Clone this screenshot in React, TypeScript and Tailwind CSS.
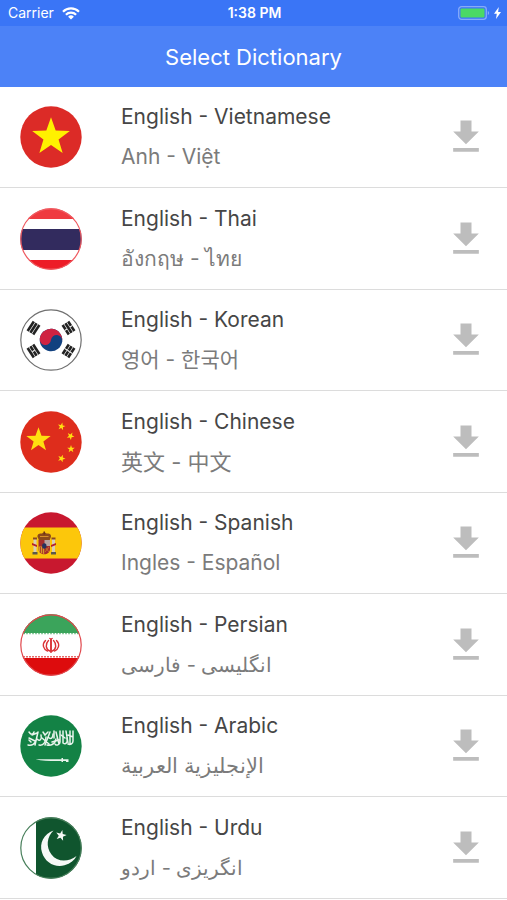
import type { ReactNode } from "react";

const STAR = "M0-10 2.36-3.24 9.51-3.09 3.82 1.24 5.88 8.09 0 4 -5.88 8.09 -3.82 1.24 -9.51-3.09 -2.36-3.24Z";

interface FlagProps {
  id: string;
  children: ReactNode;
  ring?: string;
}

function Flag({ id, children, ring }: FlagProps) {
  return (
    <svg viewBox="0 0 62 62" className="w-[62px] h-[62px] shrink-0" aria-hidden="true">
      <defs>
        <clipPath id={id}>
          <circle cx="31" cy="31" r="30.7" />
        </clipPath>
      </defs>
      <g clipPath={`url(#${id})`}>{children}</g>
      {ring && <circle cx="31" cy="31" r="30.2" fill="none" stroke={ring} strokeWidth="1.2" />}
    </svg>
  );
}

function VietnamFlag() {
  return (
    <Flag id="vn">
      <rect width="62" height="62" fill="#dc2b27" />
      <path d={STAR} transform="translate(31 31) scale(1.98)" fill="#fff100" />
    </Flag>
  );
}

function ThaiFlag() {
  return (
    <Flag id="th" ring="#ef5a60">
      <rect width="62" height="62" fill="#fff" />
      <rect width="62" height="11" fill="#ef3a40" />
      <rect y="52" width="62" height="10" fill="#ed1c27" />
      <rect y="21" width="62" height="21" fill="#322b5e" />
    </Flag>
  );
}

// three bars of a trigram, centred on 0,0; "gaps" says which bars are broken
function Trigram({ x, y, angle, gaps }: { x: number; y: number; angle: number; gaps: boolean[] }) {
  return (
    <g transform={`translate(${x} ${y}) rotate(${angle})`}>
      {gaps.map((gap, i) => (
        <g key={i}>
          <rect x="-5.7" y={-4.6 + i * 3.3} width="11.4" height="2.6" fill="#222" />
          {gap && <rect x="-0.5" y={-4.7 + i * 3.3} width="1" height="2.8" fill="#fff" />}
        </g>
      ))}
    </g>
  );
}

function KoreaFlag() {
  return (
    <Flag id="kr" ring="#707070">
      <rect width="62" height="62" fill="#fff" />
      <g transform="translate(31 31) rotate(6)">
        <circle r="11.3" fill="#11417f" />
        <path d="M-11.3 0A11.3 11.3 0 0 1 11.3 0A5.65 5.65 0 0 0 0 0A5.65 5.65 0 0 1-11.3 0Z" fill="#cf2342" />
      </g>
      <Trigram x={13.5} y={19} angle={-57} gaps={[false, false, false]} />
      <Trigram x={48.5} y={19} angle={57} gaps={[true, false, true]} />
      <Trigram x={13.5} y={42} angle={57} gaps={[false, true, false]} />
      <Trigram x={48.5} y={42} angle={-57} gaps={[true, true, true]} />
    </Flag>
  );
}

function ChinaFlag() {
  return (
    <Flag id="cn">
      <rect width="62" height="62" fill="#de2d1c" />
      <g fill="#ffdf10">
        <path d={STAR} transform="translate(18.5 29) scale(1.28)" />
        <path d={STAR} transform="translate(41.5 15.5) rotate(12) scale(.4)" />
        <path d={STAR} transform="translate(50.5 25) rotate(30) scale(.4)" />
        <path d={STAR} transform="translate(51 38) scale(.4)" />
        <path d={STAR} transform="translate(41.5 47.5) rotate(20) scale(.4)" />
      </g>
    </Flag>
  );
}

function SpainFlag() {
  return (
    <Flag id="es">
      <rect width="62" height="62" fill="#c8182f" />
      <rect y="15.5" width="62" height="31" fill="#fcc70b" />
      {/* pillars */}
      <path d="M13.5 27h3v13h-3zM32 27h3v13h-3z" fill="#d9cfb4" />
      <path d="M12.5 40h5v2.6h-5zM31 40h5v2.6h-5z" fill="#5b5a4c" />
      <path d="M13 25.5h4v2h-4zM31.500 25.500h4v2h-4z" fill="#8c4a1e" />
      <path d="M12 31l5 2v2l-5-2zM36 31l-5 2v2l5-2z" fill="#b5222c" />
      {/* crown */}
      <path d="M18 26c-2-4 2-5 4-4.500c1-1.500 3.500-1.500 4.500 0c2-.5 6 .5 4 4.500l-1 2.500h-10.500z" fill="#8b4a1b" />
      <path d="M23.500 19.500h1.500v3h-1.500z" fill="#6e3514" />
      <path d="M20 24.500h8.500" stroke="#d8902a" strokeWidth="1" />
      {/* shield */}
      <path d="M18.500 28h11.500v9c0 7-11.500 7-11.500 0z" fill="#a62c2c" />
      <path d="M24.500 28h5.500v6h-5.500z" fill="#b9a3a0" />
      <path d="M18.500 34.500h5.700v7.500c-3-.3-5.700-2-5.700-5z" fill="#d79b28" />
      <path d="M20.500 35v6M22.500 35v7" stroke="#a62c2c" strokeWidth=".8" />
      <path d="M25 35l4 5M29 35l-4 5" stroke="#d79b28" strokeWidth=".6" />
      <ellipse cx="24.300" cy="34" rx="2.200" ry="2.800" fill="#26315e" />
    </Flag>
  );
}

function IranFlag() {
  return (
    <Flag id="ir" ring="#e0474c">
      <rect width="62" height="62" fill="#fff" />
      <rect width="62" height="19" fill="#3ba45b" />
      <path d="M0 19.600h62" stroke="#8acb9d" strokeWidth="1.400" strokeDasharray="2 1" />
      <path d="M0 42.800h62" stroke="#e86a6a" strokeWidth="1.400" strokeDasharray="2 1" />
      <rect y="44" width="62" height="18" fill="#dd0c0d" />
      {/* the ring stays green along the upper band */}
      <path d="M3 19A30.200 30.200 0 0 1 59 19" fill="none" stroke="#3ba45b" strokeWidth="4" />
      <g fill="none" stroke="#da3236" strokeWidth="1.400" strokeLinecap="round">
        <path d="M31 25.500v12.500" strokeWidth="1.900" />
        <path d="M28.500 26.500c-3.500 3.500-2.800 8.500 1.200 10.500M33.500 26.500c3.500 3.500 2.800 8.500-1.200 10.500" />
        <path d="M25.500 26.500c-4 4-2 9 2 10.500M36.500 26.500c4 4 2 9-2 10.500" />
        <path d="M29.500 24.500q1.500 1 3 0" strokeWidth="1" />
      </g>
    </Flag>
  );
}

function SaudiFlag() {
  return (
    <Flag id="sa">
      <rect width="62" height="62" fill="#138245" />
      <g fill="none" stroke="#e8f4ec" strokeWidth="1.500" strokeLinecap="round">
        <path d="M9 17c2 3 4 3 5 0M8 30c4 1 7-1 8-5M9 23l6 3M12 20l5-2M18 17l-3 13M17 24c3 3 5 0 4-4M19 30c5 1 7-4 7-8" />
        <path d="M23 17l2 3 3-3M22 23l7 6M30 17l-5 13M28 22c3 3 5 1 5-3M27 30c4 1 8-1 9-6" />
        <path d="M34 16v7M36 17l3 12M32 27l7-2M40 16v11c0 3-4 4-5 2M43 16v12M43 28c3 2 5-1 4-5" />
        <path d="M46 16l2 12M50 16v13M53 16v10c0 3-3 4-5 3M41 20l4 3M48 20l5 2M11 27l-2-2" />
      </g>
      <path d="M15.500 44.200l10 .1h16v-1.300h1.500v1.200h5.500v2.800h-2.500v-1h-3v1h-1.500v-1.100c-9 0-19 .2-26-1.700z" fill="#e8f4ec" />
    </Flag>
  );
}

function PakistanFlag() {
  return (
    <Flag id="pk" ring="#487f5b">
      <rect width="62" height="62" fill="#fff" />
      <rect x="16" width="46" height="62" fill="#10552e" />
      <path d="M33.500 13.500C24 17 19 26 22 35.500C25 45.500 35 51 44.500 48.300C50.500 46.500 54.500 43 56.500 39C48 45.500 37 45 31.500 37.500C25.500 29.500 27 20 33.500 13.500Z" fill="#f6f9f6" />
      <path d={STAR} transform="translate(41 18.500) rotate(14) scale(.56)" fill="#f6f9f6" />
    </Flag>
  );
}

const dictionaries = [
  { name: "English - Vietnamese", native: "Anh - Việt", lang: "vi", size: "text-[21px]", flag: <VietnamFlag /> },
  { name: "English - Thai", native: "อังกฤษ - ไทย", lang: "th", size: "text-[21px]", flag: <ThaiFlag /> },
  { name: "English - Korean", native: "영어 - 한국어", lang: "ko", size: "text-[21px]", flag: <KoreaFlag /> },
  { name: "English - Chinese", native: "英文 - 中文", lang: "zh", size: "text-[22px]", flag: <ChinaFlag /> },
  { name: "English - Spanish", native: "Ingles - Español", lang: "es", size: "text-[21px]", flag: <SpainFlag /> },
  { name: "English - Persian", native: "انگلیسی - فارسی", lang: "fa", size: "text-[20px]", flag: <IranFlag /> },
  { name: "English - Arabic", native: "الإنجليزية العربية", lang: "ar", size: "text-[21px]", flag: <SaudiFlag /> },
  { name: "English - Urdu", native: "انگریزی - اردو", lang: "ur", size: "text-[20px]", flag: <PakistanFlag /> },
];

function StatusBar() {
  return (
    <div className="grid grid-cols-3 items-center h-[26px] pl-2 pr-1.5 bg-[#3a75f6] text-white text-sm">
      <div className="flex items-center gap-2">
        <span>Carrier</span>
        <svg viewBox="0 0 18 13" className="w-[18px] h-[13px]" aria-hidden="true">
          <g fill="none" stroke="#fff" strokeWidth="2.200">
            <path d="M1 4.700a11.300 11.300 0 0 1 16 0" />
            <path d="M3.900 7.800a7.200 7.200 0 0 1 10.200 0" />
          </g>
          <path d="M9 12.600L6.100 9.700a4.100 4.100 0 0 1 5.800 0z" fill="#fff" />
        </svg>
      </div>
      <span className="text-center font-semibold">1:38 PM</span>
      <div className="flex items-center justify-end gap-1">
        <svg viewBox="0 0 32 14" className="w-8 h-[14px]" aria-hidden="true">
          <rect x=".7" y=".7" width="27.600" height="12.600" rx="2.800" fill="none" stroke="#86abf9" strokeWidth="1.300" />
          <rect x="2.500" y="2.500" width="24" height="9" rx="1" fill="#4bd964" />
          <path d="M29.800 5v4c1.800-.6 1.800-3.400 0-4z" fill="#86abf9" />
        </svg>
        <svg viewBox="0 0 7 12" className="w-[7px] h-3" aria-hidden="true">
          <path d="M4.800 0L0 6.800h2.800L2 12l5-7H4.100z" fill="#fff" />
        </svg>
      </div>
    </div>
  );
}

export default function App() {
  return (
    <div className="min-h-screen bg-white font-['Inter','Noto_Sans','Noto_Sans_CJK_SC',sans-serif]">
      <header>
        <StatusBar />
        <div className="flex items-center justify-center h-[61px] bg-[#4c82f7]">
          <h1 className="text-[22px] leading-7 text-white">Select Dictionary</h1>
        </div>
      </header>

      <ul>
        {dictionaries.map((dict) => (
          <li
            key={dict.lang}
            className="flex items-center odd:h-[101px] even:h-[102px] pl-5 pr-[19px] border-b border-[#dcdcdc]"
          >
            {dict.flag}
            <div className="flex-1 min-w-0 pl-[39px]">
              <h2 className="text-[21px] leading-10 text-[#464646]">{dict.name}</h2>
              <p lang={dict.lang} className={`h-10 leading-10 text-[#7b7b7b] ${dict.size}`}>
                {dict.native}
              </p>
            </div>
            <button type="button" aria-label={`Download ${dict.name}`} className="shrink-0">
              <svg viewBox="0 0 24 24" className="w-11 h-11" fill="#bdbdbd" aria-hidden="true">
                <path d="M19 9h-4V3H9v6H5l7 7 7-7zM5 18v2h14v-2H5z" />
              </svg>
            </button>
          </li>
        ))}
      </ul>
    </div>
  );
}
